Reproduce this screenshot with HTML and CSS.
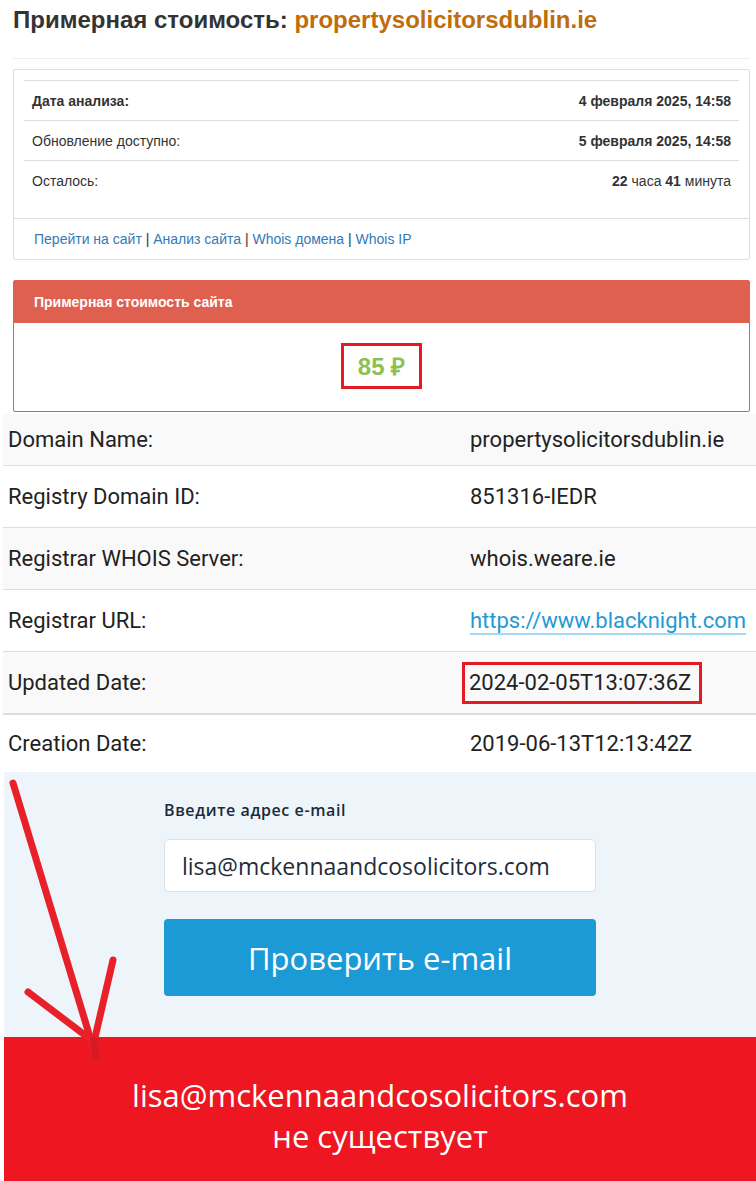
FILE: index.html
```html
<!DOCTYPE html>
<html lang="ru">
<head>
  <meta charset="UTF-8" />
  <meta name="viewport" content="width=device-width, initial-scale=1.0"/>
  <title>Примерная стоимость: propertysolicitorsdublin.ie</title>
  <link rel="stylesheet" href="styles.css">
</head>
<body>
  <div class="cost">
    <h1>Примерная стоимость: <span class="domain">propertysolicitorsdublin.ie</span></h1>
    <hr>
    <div class="panel">
      <div class="panel-body">
        <table class="info">
          <tr><td><b>Дата анализа:</b></td><td class="right"><b>4 февраля 2025, 14:58</b></td></tr>
          <tr><td>Обновление доступно:</td><td class="right"><b>5 февраля 2025, 14:58</b></td></tr>
          <tr><td>Осталось:</td><td class="right"><b>22</b> часа <b>41</b> минута</td></tr>
        </table>
      </div>
      <div class="panel-footer">
        <a href="#">Перейти на сайт</a> | <a href="#">Анализ сайта</a> | <a href="#">Whois домена</a> | <a href="#">Whois IP</a>
      </div>
    </div>
    <div class="panel panel-red">
      <div class="panel-heading">Примерная стоимость сайта</div>
      <div class="price-body">
        <span class="price mark">85 ₽</span>
      </div>
    </div>
  </div>

  <table class="whois">
    <tr class="odd"><td>Domain Name:</td><td>propertysolicitorsdublin.ie</td></tr>
    <tr><td>Registry Domain ID:</td><td>851316-IEDR</td></tr>
    <tr class="odd"><td>Registrar WHOIS Server:</td><td>whois.weare.ie</td></tr>
    <tr><td>Registrar URL:</td><td><a href="#">https://www.blacknight.com</a></td></tr>
    <tr class="odd thick"><td>Updated Date:</td><td><span class="mark mark-date">2024-02-05T13:07:36Z</span></td></tr>
    <tr><td>Creation Date:</td><td>2019-06-13T12:13:42Z</td></tr>
  </table>

  <div class="check">
    <div class="email-form">
      <label for="email">Введите адрес e-mail</label>
      <input type="text" id="email" value="lisa@mckennaandcosolicitors.com" />
      <button type="button">Проверить e-mail</button>
    </div>
    <div class="result">
      lisa@mckennaandcosolicitors.com<br>
      не существует
    </div>
    <svg class="arrow" width="130" height="300" viewBox="0 0 130 300">
      <g stroke="#e8202a" stroke-width="7" stroke-linecap="round" fill="none">
        <line x1="13" y1="11" x2="96" y2="285"/>
        <line x1="28" y1="220" x2="94" y2="270"/>
        <line x1="113" y1="188" x2="94" y2="270"/>
      </g>
      <line x1="94" y1="268" x2="96" y2="285" stroke="#d51a26" stroke-width="7" stroke-linecap="round"/>
    </svg>
  </div>
</body>
</html>
```

FILE: styles.css
```css
body { margin: 0; background: #fff; font-family: "Liberation Sans", Arial, sans-serif; color: #333; }

.cost { padding: 0 6px 0 13px; }
h1 { margin: 0; padding-top: 6px; height: 43px; font-size: 24px; font-weight: bold; color: #333; }
h1 .domain { color: #bf6c0c; }
hr { margin: 9px 0 10px 0; border: 0; border-top: 1px solid #eee; }

.panel { border: 1px solid #ddd; border-radius: 2px; background: #fff; font-size: 14px; }
.panel-body { padding: 10px 10px 18px 10px; }
.info { width: 100%; border-collapse: collapse; }
.info td { height: 39px; padding: 0 8px; border-top: 1px solid #ddd; }
.info .right { text-align: right; }
.panel-footer { height: 40px; padding: 0 20px; line-height: 40px; border-top: 1px solid #ddd; color: #333; }
.panel-footer a { color: #337ab7; text-decoration: none; }

.panel-red { margin-top: 20px; border: 1px solid #e0604f; }
.panel-heading { height: 42px; line-height: 42px; padding: 0 20px; background: #e0604f; color: #fff; font-weight: bold; }
.price-body { height: 88px; display: flex; align-items: center; justify-content: center; }
.price { font-size: 24px; font-weight: bold; color: #8cc152; }

.mark { border: 3px solid #e31b23; }
.price.mark { padding: 3px 14px 4px 14px; margin-top: -3px; }

.whois { width: calc(100% - 3px); margin: 2px 0 0 3px; border-collapse: collapse; font-family: Roboto, sans-serif; font-size: 22px; color: #222; }
.whois td { height: 61px; padding: 0 5px; border-bottom: 1px solid #ddd; }
.whois tr:first-child td { height: 51px; }
.whois tr:last-child td { height: 57px; border-bottom: 0; }
.whois td:first-child { width: 452px; }
.whois .odd td { background: #f9f9f9; }
.whois .thick td { border-bottom: 2px solid #ddd; }
.whois a { color: #1e9ad6; text-decoration: none; border-bottom: 2px solid #a6d9f2; }
.mark-date { padding: 5px 8px 6px 4px; margin-left: -8px; }

.check { position: relative; margin-left: 4px; }
.email-form { height: 265px; background: #eef5fa; padding-left: 160px; box-sizing: border-box; padding-top: 27px; font-family: "Open Sans", sans-serif; }
.email-form label { display: block; font-size: 16px; letter-spacing: 0.6px; color: #1a2a3a; font-weight: 600; margin-bottom: 18px; }
.email-form input { display: block; width: 432px; height: 53px; box-sizing: border-box; padding: 0 17px; border: 1px solid #dcdfe3; border-radius: 5px; font-family: "Open Sans", sans-serif; font-size: 23px; color: #1f2d3d; background: #fff; }
.email-form button { display: block; width: 432px; height: 77px; margin-top: 27px; border: 0; border-radius: 4px; background: #1c9ad6; color: #fff; font-family: "Open Sans", sans-serif; font-size: 31px; }
.result { height: 144px; background: #ee1620; color: #fff; text-align: center; font-family: "Open Sans", sans-serif; font-size: 31px; line-height: 41px; padding-top: 38px; box-sizing: border-box; }
.arrow { position: absolute; left: -4px; top: 0; }
```
